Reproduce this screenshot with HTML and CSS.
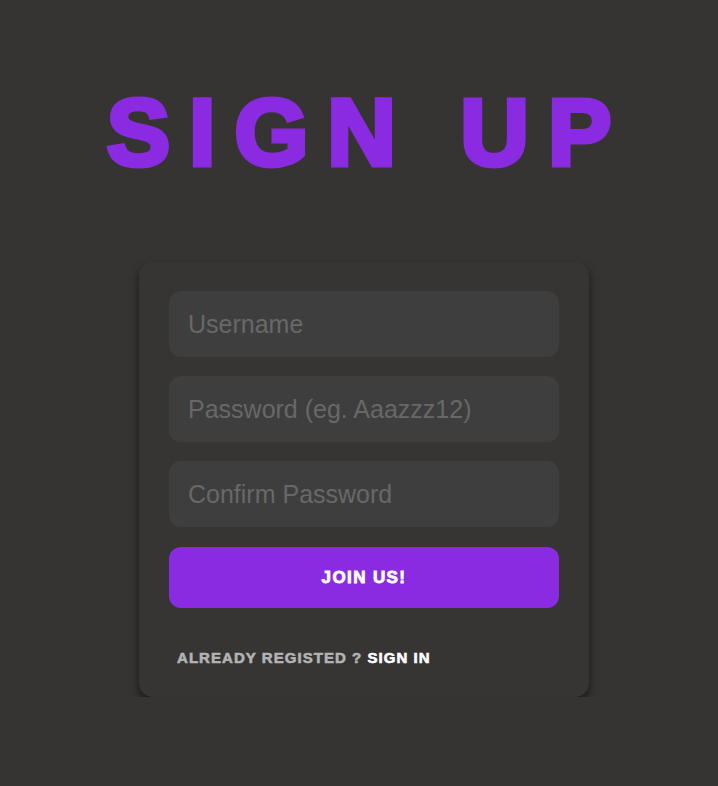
FILE: index.html
```html
<!DOCTYPE html>
<html lang="en">
<head>
<meta charset="utf-8">
<title>Sign Up</title>
<link rel="stylesheet" href="styles.css">
</head>
<body>
<main class="page">
  <h1 class="title">SIGN UP</h1>
  <form class="card">
    <input class="field" type="text" placeholder="Username" autofocus>
    <input class="field" type="password" placeholder="Password (eg. Aaazzz12)">
    <input class="field" type="password" placeholder="Confirm Password">
    <button class="join" type="button">JOIN US!</button>
    <p class="footer">ALREADY REGISTED ? <a class="signin" href="#">SIGN IN</a></p>
  </form>
</main>
</body>
</html>
```

FILE: styles.css
```css
html, body {
  margin: 0;
  padding: 0;
  background: #353433;
}
.page {
  display: flex;
  flex-direction: column;
  align-items: center;
  padding-top: 85px;
}
.title {
  margin: 0;
  font-family: "Liberation Sans", Arial, sans-serif;
  font-weight: 700;
  font-size: 95px;
  line-height: 95px;
  letter-spacing: 19px;
  color: #8a2be2;
  -webkit-text-stroke: 5px #8a2be2;
  padding-left: 19px;
}
.card {
  margin-top: 82px;
  margin-left: 10px;
  width: 450px;
  box-sizing: border-box;
  padding: 29px 30px 0;
  height: 435px;
  background: #373534;
  border-radius: 14px;
  box-shadow: 0 5px 10px rgba(0, 0, 0, 0.55);
  display: flex;
  flex-direction: column;
  gap: 19px;
}
.field {
  height: 66px;
  box-sizing: border-box;
  border: none;
  outline: none;
  border-radius: 12px;
  background: #3e3e3e;
  padding: 0 19px;
  font-family: "Liberation Sans", Arial, sans-serif;
  font-size: 25px;
  color: #cccccc;
  caret-color: #8a2be2;
}
.field::placeholder {
  color: #686868;
}
.join {
  margin-top: 1px;
  height: 61px;
  border: none;
  border-radius: 12px;
  background: #8a2be2;
  color: #ffffff;
  font-family: "Liberation Sans", Arial, sans-serif;
  font-weight: 700;
  font-size: 17px;
  letter-spacing: 1.4px;
  -webkit-text-stroke: 0.8px #ffffff;
}
.footer {
  margin: 22px 0 0 8px;
  font-family: "Liberation Sans", Arial, sans-serif;
  font-weight: 700;
  font-size: 15px;
  letter-spacing: 1.05px;
  color: #b3b3b3;
  -webkit-text-stroke: 0.6px #b3b3b3;
}
.signin {
  color: #ffffff;
  text-decoration: none;
  -webkit-text-stroke: 0.6px #ffffff;
}
```
